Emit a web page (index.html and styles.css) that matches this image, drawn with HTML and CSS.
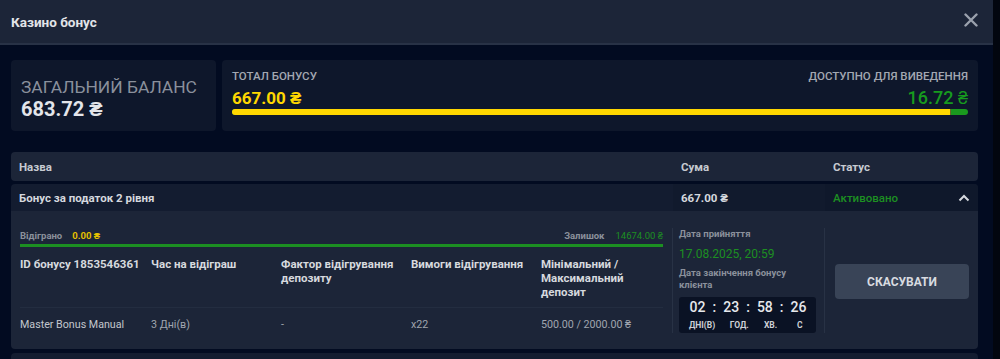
FILE: index.html
```html
<!DOCTYPE html>
<html lang="uk">
<head>
    <meta charset="UTF-8">
    <title>Казино бонус</title>
    <link rel="stylesheet" href="styles.css">
</head>
<body>
<div class="page">
    <div class="modal">
        <div class="modal-head">
            <span class="modal-title">Казино бонус</span>
            <span class="close">
                <svg width="14" height="14" viewBox="0 0 14 14"><path d="M1.5 1.5 L12.5 12.5 M12.5 1.5 L1.5 12.5" stroke="#9aa1ad" stroke-width="2.4" stroke-linecap="round"/></svg>
            </span>
        </div>

        <div class="modal-body">
            <!-- баланс -->
            <div class="balance-row">
                <div class="card card-total">
                    <div class="total-label">Загальний баланс</div>
                    <div class="total-value">683.72 ₴</div>
                </div>
                <div class="card card-bonus">
                    <div class="bonus-top">
                        <div>
                            <div class="small-label">Тотал бонусу</div>
                            <div class="bonus-value">667.00 ₴</div>
                        </div>
                        <div class="right">
                            <div class="small-label">Доступно для виведення</div>
                            <div class="withdraw-value">16.72 ₴</div>
                        </div>
                    </div>
                    <div class="bar">
                        <div class="bar-yellow" style="width: 97.6%"></div>
                        <div class="bar-green"></div>
                    </div>
                </div>
            </div>

            <!-- таблиця -->
            <div class="table-head">
                <div class="col-name">Назва</div>
                <div class="col-sum">Сума</div>
                <div class="col-status">Статус</div>
            </div>
            <div class="table-row">
                <div class="col-name">Бонус за податок 2 рівня</div>
                <div class="col-sum">667.00 ₴</div>
                <div class="col-status">
                    <span class="active">Активовано</span>
                    <svg width="12" height="8" viewBox="0 0 12 8"><path d="M1.5 6.5 L6 2 L10.5 6.5" fill="none" stroke="#d5d8de" stroke-width="2"/></svg>
                </div>
            </div>

            <div class="detail">
                <div class="detail-left">
                    <div class="wager">
                        <div><span class="mini-label">Відіграно</span><span class="played">0.00 ₴</span></div>
                        <div><span class="mini-label">Залишок</span><span class="left-sum">14674.00 ₴</span></div>
                    </div>
                    <div class="wager-bar"></div>
                    <div class="info-grid">
                        <div class="info-h">ID бонусу 1853546361</div>
                        <div class="info-h">Час на відіграш</div>
                        <div class="info-h">Фактор відігрування депозиту</div>
                        <div class="info-h">Вимоги відігрування</div>
                        <div class="info-h">Мінімальний / Максимальний депозит</div>
                        <div class="info-d first">Master Bonus Manual</div>
                        <div class="info-d">3 Дні(в)</div>
                        <div class="info-d">-</div>
                        <div class="info-d">x22</div>
                        <div class="info-d">500.00 / 2000.00 ₴</div>
                    </div>
                </div>
                <div class="detail-dates">
                    <div class="mini-label">Дата прийняття</div>
                    <div class="date-val">17.08.2025, 20:59</div>
                    <div class="mini-label end-label">Дата закінчення бонусу клієнта</div>
                    <div class="timer">
                        <div class="t-nums"><span>02</span><b>:</b><span>23</span><b>:</b><span>58</span><b>:</b><span>26</span></div>
                        <div class="t-labels"><span class="c1">дні(в)</span><span class="c3">год.</span><span class="c5">хв.</span><span class="c7">с</span></div>
                    </div>
                </div>
                <div class="detail-action">
                    <button class="btn-cancel">Скасувати</button>
                </div>
            </div>
            <div class="next-row"></div>
        </div>
    </div>
    <div class="scrollbar"></div>
</div>
</body>
</html>
```

FILE: styles.css
```css
body {
    margin: 0;
    font-family: Roboto, "Liberation Sans", sans-serif;
    background-color: #02060f;
    color: #d5d8de;
    overflow: hidden;
}
.page {
    display: flex;
    height: 359px;
}
.modal {
    width: 993px;
    background-color: #020b21;
}
.scrollbar {
    flex: 1;
    background-color: #02060f;
}
.modal-head {
    height: 43px;
    background-color: #1c2538;
    border-bottom: 2px solid #283246;
    display: flex;
    align-items: center;
    justify-content: space-between;
    padding: 0 15px 0 11px;
}
.modal-title {
    font-size: 13.5px;
    font-weight: bold;
    color: #e2e4e8;
    margin-top: 1px;
}
.close {
    display: flex;
    margin-top: -3px;
}
.modal-body {
    padding: 15px 15px 0 11px;
}

/* баланс */
.balance-row {
    display: flex;
    gap: 6px;
    height: 71px;
}
.card {
    background-color: #0e172b;
    border-radius: 4px;
    box-sizing: border-box;
}
.card-total {
    width: 205px;
    padding: 17px 10px;
}
.total-label {
    font-size: 17.4px;
    text-transform: uppercase;
    color: #8a909c;
    line-height: 20px;
}
.total-value {
    font-size: 20px;
    font-weight: bold;
    color: #e3e5ea;
    line-height: 24px;
}
.card-bonus {
    flex: 1;
    padding: 9px 10px 0 10px;
}
.bonus-top {
    display: flex;
    justify-content: space-between;
}
.right {
    text-align: right;
}
.small-label {
    font-size: 11.5px;
    font-weight: 500;
    text-transform: uppercase;
    color: #a3a8b2;
    line-height: 14px;
}
.bonus-value {
    font-size: 17px;
    font-weight: bold;
    color: #ffd700;
    line-height: 22px;
    margin-top: 4px;
}
.withdraw-value {
    font-size: 18px;
    font-weight: 500;
    color: #179b1e;
    line-height: 22px;
    margin-top: 4px;
}
.bar {
    display: flex;
    height: 6px;
    border-radius: 3px;
    overflow: hidden;
    background-color: #1a9a1e;
}
.bar-yellow {
    background-color: #ffd700;
    border-right: 1px solid #6b6a20;
}
.bar-green {
    flex: 1;
}

/* таблиця */
.table-head, .table-row {
    display: flex;
    align-items: center;
    font-size: 11.5px;
    font-weight: bold;
}
.table-head {
    margin-top: 21px;
    height: 29px;
    background-color: #1c2538;
    border-radius: 4px;
    color: #c6cad1;
}
.table-row {
    margin-top: 3px;
    height: 27px;
    color: #d5d8de;
    background-color: #131c30;
    border-radius: 4px 4px 0 0;
}
.col-name {
    flex: 1;
    padding-left: 8px;
}
.col-sum {
    width: 152px;
    padding-left: 8px;
    box-sizing: border-box;
}
.col-status {
    width: 153px;
    padding: 0 8px 0 8px;
    box-sizing: border-box;
    display: flex;
    justify-content: space-between;
    align-items: center;
}
.table-row .col-name, .table-row .col-sum, .table-row .col-status {
    height: 27px;
    display: flex;
    align-items: center;
}
.table-row .col-sum {
    background-color: #111a2d;
}
.table-row .col-status {
    background-color: #0f182b;
    border-top-right-radius: 4px;
}
.active {
    color: #1d8f22;
    font-weight: 500;
}

/* деталі */
.detail {
    display: flex;
    background-color: #1c2538;
    height: 138px;
    border-radius: 0 0 4px 4px;
    box-sizing: border-box;
    padding: 17px 9px 0 9px;
}
.detail-left {
    width: 643px;
}
.wager {
    display: flex;
    justify-content: space-between;
    line-height: 12px;
}
.mini-label {
    font-size: 9.5px;
    font-weight: bold;
    color: #8b919c;
    line-height: 12px;
}
.played {
    font-size: 9.5px;
    font-weight: bold;
    color: #e4c000;
    margin-left: 10px;
}
.left-sum {
    font-size: 9.5px;
    color: #1d8f22;
    margin-left: 11px;
}
.wager-bar {
    height: 3px;
    background-color: #1c8f22;
    margin-top: 2px;
}
.info-grid {
    display: grid;
    grid-template-columns: 131px 130px 130px 130px 122px;
    margin-top: 10px;
}
.info-h {
    font-size: 11.5px;
    font-weight: bold;
    color: #d6d9de;
    line-height: 14px;
    padding-right: 6px;
    height: 50px;
    border-bottom: 1px solid #232d40;
}
.info-d {
    font-size: 10.7px;
    color: #a0a5af;
    padding-top: 10px;
}
.info-d.first {
    color: #c3c7cd;
}
.detail-dates {
    border-left: 1px solid #283245;
    border-right: 1px solid #283245;
    margin-left: 9px;
    padding: 0 6px;
    width: 153px;
    box-sizing: border-box;
    height: 105px;
}
.date-val {
    font-size: 12px;
    color: #1d8f22;
    line-height: 14px;
    margin: 7px 0 6px 0;
}
.end-label {
    width: 118px;
}
.timer {
    background-color: #0a1224;
    border-radius: 3px;
    width: 137px;
    box-sizing: border-box;
    margin-top: 6px;
    padding: 2px 9px 2px 10px;
}
.t-nums, .t-labels {
    display: grid;
    grid-template-columns: repeat(7, 1fr);
    justify-items: center;
}
.t-nums {
    font-size: 14px;
    font-weight: 500;
    color: #e6e8ec;
    line-height: 16px;
}
.t-nums b {
    font-weight: 500;
}
.t-labels {
    font-size: 8.5px;
    font-weight: bold;
    color: #cdd0d6;
    text-transform: uppercase;
    line-height: 12px;
    margin-top: 4px;
    white-space: nowrap;
}
.t-labels .c1 { grid-column: 1; }
.t-labels .c3 { grid-column: 3; }
.t-labels .c5 { grid-column: 5; }
.t-labels .c7 { grid-column: 7; }
.detail-action {
    flex: 1;
    display: flex;
    align-items: flex-start;
    justify-content: flex-end;
    padding-top: 36px;
}
.btn-cancel {
    width: 134px;
    height: 35px;
    background-color: #394457;
    color: #d8dbe0;
    border: none;
    border-radius: 4px;
    font-family: inherit;
    font-size: 12px;
    font-weight: bold;
    text-transform: uppercase;
}
.next-row {
    margin-top: 4px;
    height: 10px;
    background-color: #131c30;
    border-radius: 4px 4px 0 0;
}
```
